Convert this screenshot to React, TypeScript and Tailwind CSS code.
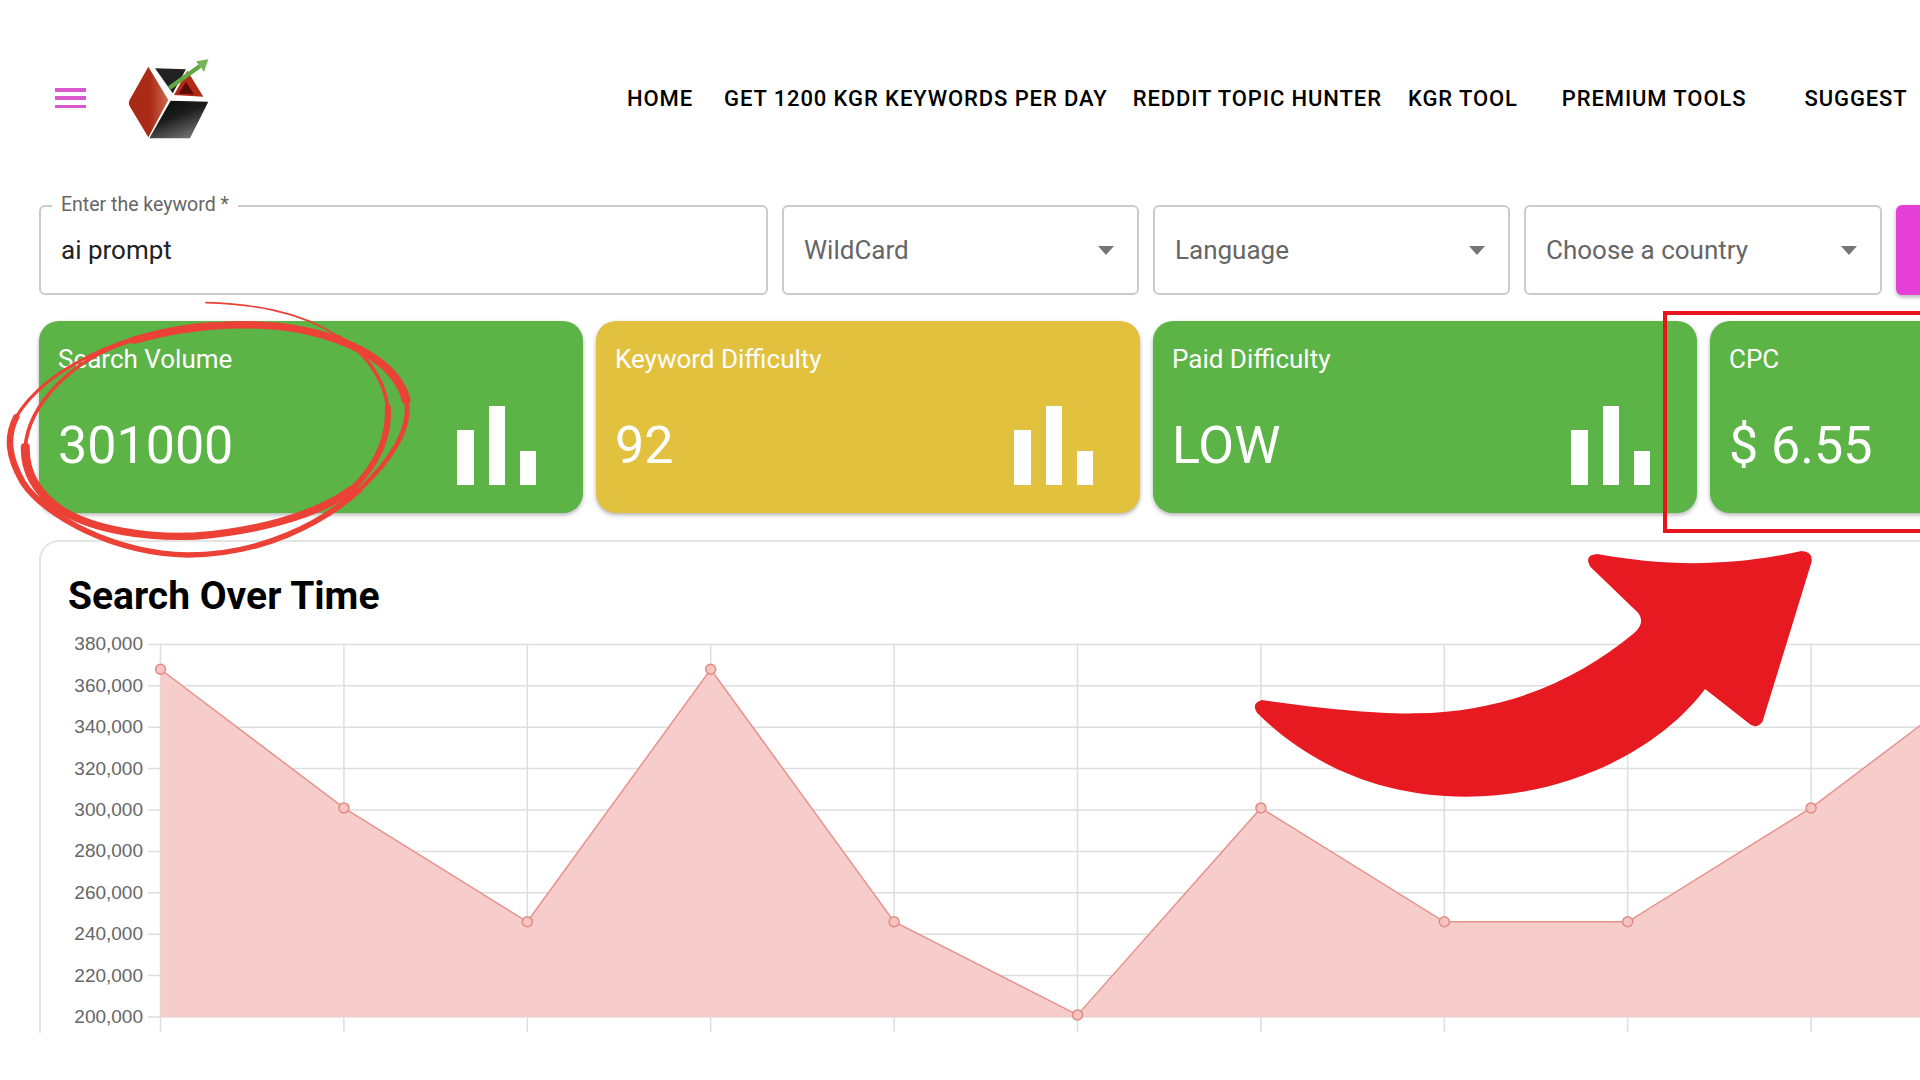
import { useId } from "react"

const font = "font-['Roboto',sans-serif]"

const navItems = [
  { label: "HOME", cls: "ml-[387px]" },
  { label: "GET 1200 KGR KEYWORDS PER DAY", cls: "ml-[31px]" },
  { label: "REDDIT TOPIC HUNTER", cls: "ml-[25px]" },
  { label: "KGR TOOL", cls: "ml-[26px]" },
  { label: "PREMIUM TOOLS", cls: "ml-[44px]" },
  { label: "SUGGEST", cls: "ml-[58px]" },
]

const stats = [
  { title: "Search Volume", value: "301000", bg: "bg-[#5cb346]" },
  { title: "Keyword Difficulty", value: "92", bg: "bg-[#e2c13f]" },
  { title: "Paid Difficulty", value: "LOW", bg: "bg-[#5cb346]" },
  { title: "CPC", value: "$ 6.55", bg: "bg-[#5cb346]" },
]

const ticks = [380, 360, 340, 320, 300, 280, 260, 240, 220, 200]
const series = [368, 301, 246, 368, 246, 201, 301, 246, 246, 301, 368]

const xAt = (i: number) => 160.5 + i * 183.4
const yAt = (k: number) => 1016 - ((k - 200) / 20) * 41.4

function Logo() {
  const id = useId()
  return (
    <svg width="140" height="120" viewBox="0 0 420 360" className="mt-[4px] shrink-0">
      <defs>
        <linearGradient id={id + "red"} x1="0" x2="1" y1="0" y2="0">
          <stop offset="0" stopColor="#a92a14" />
          <stop offset="0.55" stopColor="#ab2c16" />
          <stop offset="1" stopColor="#cf6a50" />
        </linearGradient>
        <linearGradient id={id + "black"} x1="0" x2="0.6" y1="0" y2="1">
          <stop offset="0" stopColor="#0a0a0a" />
          <stop offset="0.5" stopColor="#1c1c1c" />
          <stop offset="1" stopColor="#6e6e6e" />
        </linearGradient>
      </defs>
      <path d="M145 80 L205 180 L145 292 L90 200 Q83 190 90 178 Z" fill={`url(#${id}red)`} />
      <path d="M165 85 L258 88 L218 160 Z" fill="#222222" />
      <path d="M262 92 L310 170 L222 165 Z" fill="#b32a14" />
      <path d="M258 125 L282 163 L236 161 Z" fill="#5d0c04" />
      <path d="M212 182 L325 185 L270 295 L148 295 Z" fill={`url(#${id}black)`} />
      <path d="M208 144 L300 78" stroke="#62a844" strokeWidth="13" fill="none" />
      <path d="M288 64 L325 58 L312 96 L303 82 Z" fill="#74b356" />
    </svg>
  )
}

function SelectBox({ label, cls }: { label: string; cls: string }) {
  return (
    <div className={`${cls} h-[90px] shrink-0 rounded-[6px] border-2 border-[#cbcbcb] flex items-center justify-between pl-[20px] pr-[23px]`}>
      <span className="text-[26px] text-[#666666]">{label}</span>
      <span className="w-0 h-0 border-l-[8px] border-r-[8px] border-t-[9px] border-l-transparent border-r-transparent border-t-[#757575]" />
    </div>
  )
}

function StatCard({ title, value, bg }: { title: string; value: string; bg: string }) {
  return (
    <div className={`${bg} w-[544px] h-[192px] shrink-0 rounded-[20px] shadow-[0_2px_4px_rgba(0,0,0,0.3)] pt-[22px] text-white`}>
      <div className="pl-[19px] text-[26px] leading-[32px]">{title}</div>
      <div className="mt-[31px] flex h-[79px] items-center justify-between pl-[19px] pr-[47px]">
        <span className="text-[52px] leading-none">{value}</span>
        <div className="flex h-full items-end gap-[15px]">
          <div className="h-[55px] w-[17px] bg-white" />
          <div className="h-[79px] w-[16px] bg-white" />
          <div className="h-[34px] w-[16px] bg-white" />
        </div>
      </div>
    </div>
  )
}

function Chart() {
  const pts = series.map((v, i) => `${xAt(i)},${yAt(v)}`).join(" ")
  return (
    <svg width="1879" height="417" viewBox="41 616 1879 417" className="block">
      {ticks.map((t) => (
        <line key={t} x1="148" x2="1920" y1={yAt(t)} y2={yAt(t)} stroke="#dedede" strokeWidth="1.5" />
      ))}
      {series.map((_, i) => (
        <line key={i} x1={xAt(i)} x2={xAt(i)} y1={yAt(380)} y2="1031" stroke="#dedede" strokeWidth="1.5" />
      ))}
      <polygon points={`${xAt(0)},1016 ${pts} ${xAt(10)},1016`} fill="#f6cdcb" />
      <polyline points={pts} fill="none" stroke="#e8928c" strokeWidth="1.5" />
      {series.map((v, i) => (
        <circle key={i} cx={xAt(i)} cy={yAt(v)} r="5" fill="#f6c4c1" stroke="#e38a85" strokeWidth="1.5" />
      ))}
      {ticks.map((t) => (
        <text
          key={t}
          x="143"
          y={yAt(t) + 6}
          textAnchor="end"
          fontFamily="'Liberation Sans', sans-serif"
          fontSize="19"
          fill="#666666"
        >
          {t},000
        </text>
      ))}
    </svg>
  )
}

export default function App() {
  return (
    <div className={`${font} relative h-[1080px] w-[1920px] overflow-hidden bg-white`}>
      <div className="h-[1033px] overflow-hidden">
        <header className="flex h-[196px] items-center whitespace-nowrap">
          <div className="ml-[55px] flex h-[20px] w-[31px] shrink-0 flex-col justify-between">
            <div className="h-[3.5px] bg-[#d958d0]" />
            <div className="h-[3.5px] bg-[#d958d0]" />
            <div className="h-[3.5px] bg-[#d958d0]" />
          </div>
          <div className="ml-[14px]">
            <Logo />
          </div>
          <nav className="flex shrink-0 items-center text-[22px] font-medium tracking-[0.9px] text-black">
            {navItems.map((n) => (
              <span key={n.label} className={n.cls}>
                {n.label}
              </span>
            ))}
          </nav>
        </header>

        <div className="mt-[9px] flex gap-[14px] pl-[39px]">
          <div className="relative flex h-[90px] w-[729px] shrink-0 items-center rounded-[6px] border-2 border-[#cbcbcb] pl-[20px]">
            <span className="absolute -top-[14px] left-[11px] bg-white px-[9px] text-[19.5px] leading-[24px] text-[#666666]">
              Enter the keyword *
            </span>
            <span className="text-[26px] text-[#222222]">ai prompt</span>
          </div>
          <SelectBox label="WildCard" cls="w-[357px]" />
          <SelectBox label="Language" cls="w-[357px]" />
          <SelectBox label="Choose a country" cls="w-[358px]" />
          <div className="h-[90px] w-[120px] shrink-0 rounded-[6px] bg-[#e63fd6] shadow-[0_2px_4px_rgba(0,0,0,0.3)]" />
        </div>

        <div className="mt-[26px] flex gap-[13px] pl-[39px]">
          {stats.map((s) => (
            <StatCard key={s.title} {...s} />
          ))}
        </div>

        <div className="ml-[39px] mt-[27px] w-[1950px] rounded-[20px] border-2 border-[#e4e4e4] pb-[40px]">
          <h2 className="pl-[27px] pt-[33px] text-[39px] font-bold leading-[42px] text-black">Search Over Time</h2>
          <Chart />
        </div>
      </div>

      {/* hand drawn annotations on top of the screenshot */}
      <svg
        width="640"
        height="380"
        viewBox="0 0 1568 1140"
        preserveAspectRatio="none"
        className="absolute left-0 top-[300px]"
        fill="none"
        stroke="#ec4136"
        strokeLinecap="round"
      >
        {/* outer loop */}
        <path strokeWidth="8" d="M520 70 C300 90 110 210 40 350" />
        <path strokeWidth="16" d="M40 350 C15 410 20 470 55 545 C110 650 280 760 460 765 C640 765 790 670 880 570" />
        <path strokeWidth="12" d="M880 570 C960 480 1010 380 995 300" />
        <path strokeWidth="22" d="M995 300 C975 200 880 130 760 95 C640 60 480 70 330 120" />
        {/* inner loop */}
        <path strokeWidth="9" d="M330 120 C170 175 70 320 62 440" />
        <path strokeWidth="22" d="M62 440 C60 520 90 580 150 630 C230 690 360 715 480 708 C620 695 770 650 860 570" />
        <path strokeWidth="15" d="M860 570 C930 490 955 400 950 320" />
        <path strokeWidth="9" d="M950 320 C940 230 890 150 830 110" />
        <path strokeWidth="5" d="M830 110 C730 30 610 12 505 8" />
      </svg>

      <div className="absolute left-[1663px] top-[311px] h-[222px] w-[300px] border-4 border-[#e8141c]" />

      <svg
        width="720"
        height="300"
        viewBox="0 0 1568 900"
        preserveAspectRatio="none"
        className="absolute left-[1200px] top-[530px]"
      >
        <path
          d="M135 510 C260 535 380 552 470 550 C680 545 830 440 945 310 Q970 280 955 250 L850 110 Q835 75 865 72 C1000 105 1140 115 1310 63 Q1335 65 1332 95 L1225 575 Q1210 600 1195 580 L1100 477 C1000 660 800 800 580 800 C370 800 220 680 125 550 Q110 520 135 510 Z"
          fill="#e81a21"
        />
      </svg>
    </div>
  )
}
